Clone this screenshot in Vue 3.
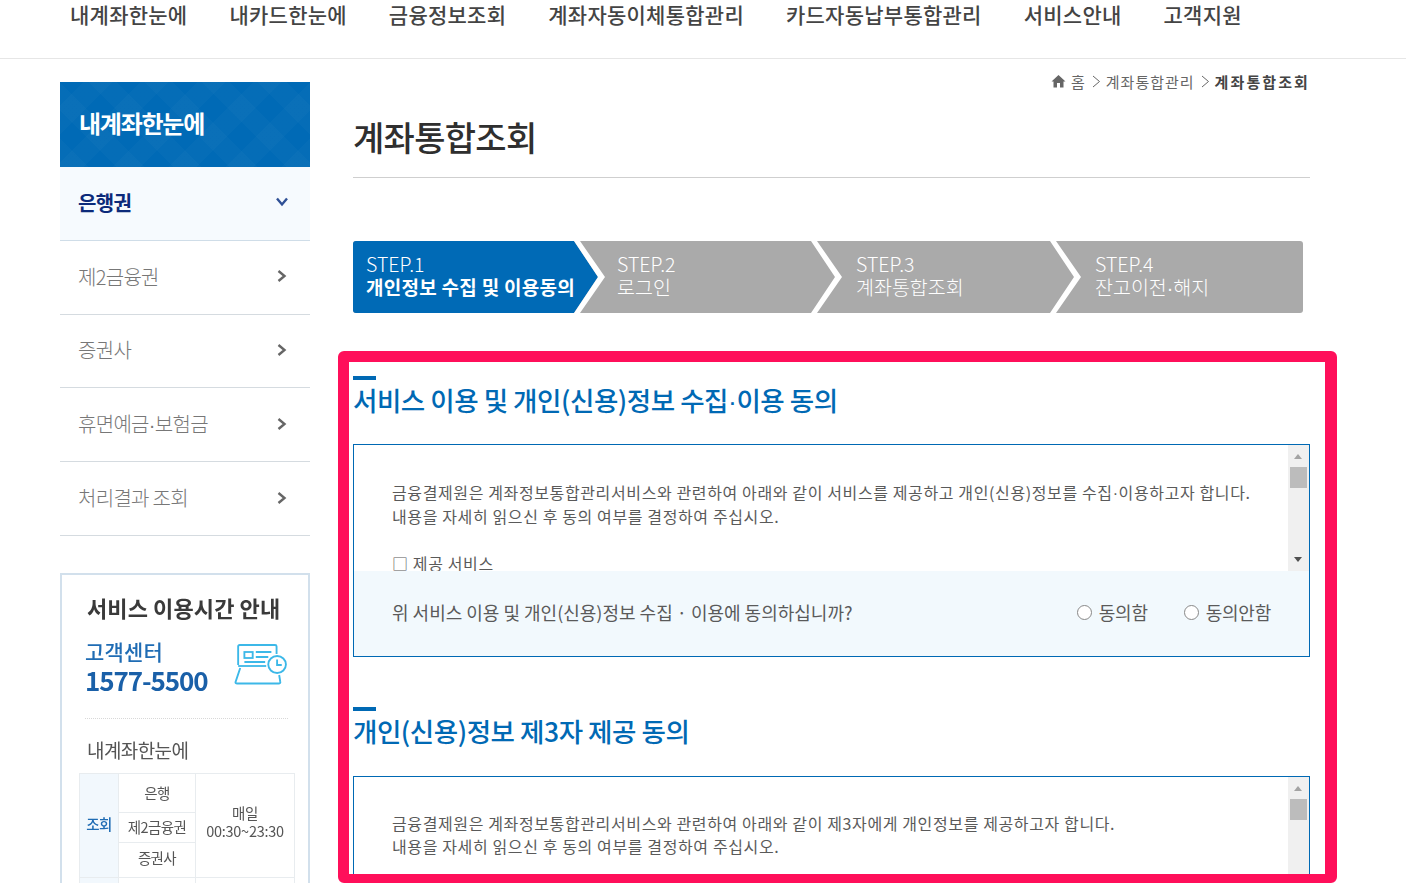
<script setup>
const navItems = ['내계좌한눈에', '내카드한눈에', '금융정보조회', '계좌자동이체통합관리', '카드자동납부통합관리', '서비스안내', '고객지원']
const sideItems = ['제2금융권', '증권사', '휴면예금·보험금', '처리결과 조회']
const steps = [
  { label: 'STEP.1', name: '개인정보 수집 및 이용동의' },
  { label: 'STEP.2', name: '로그인' },
  { label: 'STEP.3', name: '계좌통합조회' },
  { label: 'STEP.4', name: '잔고이전·해지' },
]
</script>

<template>
  <div class="page">
    <header class="topnav">
      <a v-for="item in navItems" :key="item" class="topnav-item">{{ item }}</a>
    </header>

    <div class="layout">
      <aside class="sidebar">
        <div class="side-head">내계좌한눈에</div>
        <div class="side-item active">
          <span>은행권</span>
          <svg class="chev" width="14" height="12" viewBox="0 0 14 12"><path d="M2 2.5 7 8.5 12 2.5" fill="none" stroke="#2f5096" stroke-width="2.4" /></svg>
        </div>
        <div v-for="item in sideItems" :key="item" class="side-item">
          <span><template v-for="(part, i) in item.split('·')" :key="part"><span v-if="i" class="dot">·</span>{{ part }}</template></span>
          <svg class="chev" width="14" height="14" viewBox="0 0 14 14"><path d="M3.5 2 9.5 7 3.5 12" fill="none" stroke="#666" stroke-width="2.4" /></svg>
        </div>

        <div class="hours">
          <h3 class="hours-title">서비스 이용시간 안내</h3>
          <div class="hours-contact">
            <div>
              <div class="hours-label">고객센터</div>
              <div class="hours-phone">1577-5500</div>
            </div>
            <svg class="hours-icon" width="54" height="42" viewBox="0 0 52 42" preserveAspectRatio="none" fill="none" stroke="#3cb8e8" stroke-width="1.8">
              <path d="M4 22V3.5Q4 2 5.5 2H39.5Q41 2 41 3.5V11" />
              <path d="M4 23H31" />
              <rect x="10" y="9" width="8" height="6" />
              <path d="M21 9H36M21 14H33M10 19H30" />
              <circle cx="41.5" cy="21.5" r="8.5" />
              <path d="M41.5 16.5V22H46" />
              <path d="M6 25 1.5 39Q1.2 40.5 3 40.5H43Q45 40.5 44.5 38.5L43.5 32" />
            </svg>
          </div>
          <div class="hours-sub">내계좌한눈에</div>
          <table class="hours-table">
            <colgroup>
              <col class="c1" />
              <col class="c2" />
              <col class="c3" />
            </colgroup>
            <tbody>
              <tr class="r1">
                <th rowspan="3">조회</th>
                <td>은행</td>
                <td rowspan="3" class="daily">매일<br />00:30~23:30</td>
              </tr>
              <tr class="r2"><td>제2금융권</td></tr>
              <tr class="r3"><td class="up">증권사</td></tr>
              <tr class="r4"><th></th><td></td><td></td></tr>
            </tbody>
          </table>
        </div>
      </aside>

      <main class="main">
        <nav class="crumbs">
          <svg width="15" height="14" viewBox="0 0 15 14"><path d="M7.5 1 0.5 7.5H2.5V13.5H6V9H9V13.5H12.5V7.5H14.5Z" fill="#666" /></svg>
          <span class="crumb-home">홈</span>
          <svg class="crumb-sep" width="9" height="13" viewBox="0 0 9 13"><path d="M1 1 7.5 6.5 1 12" fill="none" stroke="#666" /></svg>
          <span>계좌통합관리</span>
          <svg class="crumb-sep" width="9" height="13" viewBox="0 0 9 13"><path d="M1 1 7.5 6.5 1 12" fill="none" stroke="#666" /></svg>
          <strong>계좌통합조회</strong>
        </nav>
        <h1 class="title">계좌통합조회</h1>

        <ol class="steps">
          <li v-for="(step, i) in steps" :key="step.label" class="step" :class="{ current: i === 0 }">
            <span class="step-label">{{ step.label }}</span>
            <span class="step-name"><template v-for="(part, k) in step.name.split('·')" :key="part"><span v-if="k" class="dot">·</span>{{ part }}</template></span>
            <svg v-if="i < 3" class="step-arrow" width="34" height="72" viewBox="0 0 34 72">
              <polygon v-if="i === 0" points="0,0 2,0 26,36 2,72 0,72" fill="#006ab6" />
              <polygon points="2,0 8,0 33,36 8,72 2,72 26,36" fill="#fff" />
            </svg>
          </li>
        </ol>

        <section class="agree first">
          <h2 class="agree-title">서비스 이용 및 개인(신용)정보 수집<span class="dot">·</span>이용 동의</h2>
          <div class="agree-box">
            <div class="agree-text">
              <p>금융결제원은 계좌정보통합관리서비스와 관련하여 아래와 같이 서비스를 제공하고 개인(신용)정보를 수집<span class="dot">·</span>이용하고자 합니다.<br />내용을 자세히 읽으신 후 동의 여부를 결정하여 주십시오.</p>
              <p>□ 제공 서비스</p>
              <div class="scrollbar">
                <i class="arrow-up"></i>
                <i class="thumb"></i>
                <i class="arrow-down"></i>
              </div>
            </div>
            <div class="agree-answer">
              <span class="question">위 서비스 이용 및 개인(신용)정보 수집 · 이용에 동의하십니까?</span>
              <label class="radio"><i></i>동의함</label>
              <label class="radio"><i></i>동의안함</label>
            </div>
          </div>
        </section>

        <section class="agree second">
          <h2 class="agree-title">개인(신용)정보 제3자 제공 동의</h2>
          <div class="agree-box">
            <div class="agree-text">
              <p>금융결제원은 계좌정보통합관리서비스와 관련하여 아래와 같이 제3자에게 개인정보를 제공하고자 합니다.<br />내용을 자세히 읽으신 후 동의 여부를 결정하여 주십시오.</p>
              <div class="scrollbar">
                <i class="arrow-up"></i>
                <i class="thumb"></i>
              </div>
            </div>
          </div>
        </section>
      </main>
    </div>

    <div class="highlight"></div>
  </div>
</template>

<style>
html, body { margin: 0; background: #fff; }
</style>

<style scoped>
.page {
  position: relative;
  width: 1406px;
  height: 883px;
  overflow: hidden;
  background: #fff;
  font-family: "Noto Sans CJK KR", "Noto Sans", sans-serif;
  color: #555;
}
.dot {
  font-family: "Liberation Sans", sans-serif;
}
.topnav {
  display: flex;
  gap: 42px;
  height: 58px;
  padding-left: 70px;
  border-bottom: 1px solid #e6e6e6;
  box-sizing: content-box;
}
.topnav-item {
  font-size: 21px;
  line-height: 28px;
  font-weight: 500;
  letter-spacing: 0.25px;
  color: #444;
  white-space: nowrap;
}
.layout {
  display: flex;
  gap: 43px;
  padding-left: 60px;
}
.sidebar {
  width: 250px;
  flex: none;
  margin-top: 23px;
}
.side-head {
  height: 85px;
  padding: 0 0 4px 19px;
  display: flex;
  align-items: center;
  box-sizing: border-box;
  background-color: #006ab6;
  background-image: repeating-linear-gradient(45deg, rgba(255,255,255,.018) 0 20px, transparent 20px 40px), repeating-linear-gradient(-45deg, rgba(255,255,255,.018) 0 20px, transparent 20px 40px);
  color: #fff;
  font-size: 24px;
  font-weight: 700;
  letter-spacing: -1.25px;
}
.side-item {
  height: 73.8px;
  box-sizing: border-box;
  padding: 0 21px 2px 18px;
  display: flex;
  align-items: center;
  justify-content: space-between;
  border-bottom: 1px solid #d5dbe0;
  font-size: 20px;
  letter-spacing: -0.7px;
  color: #777;
  font-weight: 300;
}
.side-item.active {
  background: #f6fafe;
  color: #0c2a7a;
  font-weight: 700;
  border-bottom-color: #cfdde8;
}
.hours {
  margin-top: 37px;
  height: 320px;
  box-sizing: border-box;
  padding: 17px 13px 0 18px;
  border: 2px solid #d2e0ec;
  filter: blur(0.35px);
}
.hours-title {
  margin: 0 0 0 7px;
  font-size: 22px;
  line-height: 30px;
  font-weight: 700;
  letter-spacing: 0.1px;
  color: #3a3a3a;
  white-space: nowrap;
}
.hours-contact {
  margin: 15px 7px 0 5px;
  padding-bottom: 23px;
  display: flex;
  justify-content: space-between;
  align-items: flex-start;
  border-bottom: 1px dotted #d8d8d8;
}
.hours-label {
  font-size: 21px;
  line-height: 28px;
  letter-spacing: 0.2px;
  color: #1f6cb4;
  font-weight: 500;
}
.hours-phone {
  font-size: 26px;
  line-height: 30px;
  font-weight: 700;
  letter-spacing: -1.1px;
  color: #1a60a8;
}
.hours-icon {
  margin: 6px 0 0 0;
}
.hours-sub {
  margin: 17px 0 9px 7px;
  font-size: 19px;
  line-height: 28px;
  letter-spacing: -0.6px;
  color: #555;
}
.hours-table {
  width: 215px;
  table-layout: fixed;
  border-collapse: collapse;
  font-size: 14.5px;
  letter-spacing: -0.6px;
  color: #555;
  text-align: center;
  margin-left: -1px;
}
.c1 { width: 39px; }
.c2 { width: 77px; }
.c3 { width: 99px; }
.hours-table th,
.hours-table td {
  border: 1px solid #e8ecef;
  padding: 0;
  line-height: 18px;
  font-weight: 400;
}
.hours-table th {
  background: #f2f8fd;
  color: #1f6cb4;
  font-weight: 500;
  padding-bottom: 3px;
}
.hours-table td.daily {
  padding-bottom: 6px;
  letter-spacing: -0.25px;
}
.hours-table td.up {
  padding-bottom: 3px;
}
.r1 { height: 39px; }
.r2 { height: 30px; }
.r3 { height: 35px; }
.r4 { height: 30px; }
.main {
  width: 957px;
  flex: none;
}
.crumbs {
  display: flex;
  justify-content: flex-end;
  align-items: center;
  height: 20px;
  margin-top: 12px;
  font-size: 15px;
  color: #666;
  letter-spacing: 1px;
  white-space: nowrap;
}
.crumb-home { margin-left: 5px; }
.crumb-sep { margin: 0 5px 0 6px; }
.crumbs strong {
  color: #444;
  font-weight: 700;
  letter-spacing: 2.1px;
}
.title {
  margin: 21px 0 0;
  height: 65px;
  box-sizing: content-box;
  border-bottom: 1px solid #cfcfcf;
  font-size: 34px;
  line-height: 50px;
  font-weight: 500;
  letter-spacing: -0.7px;
  color: #2f2f2f;
}
.steps {
  list-style: none;
  margin: 63px 0 0;
  padding: 0;
  width: 950px;
  height: 72px;
  display: flex;
  background: #aaa;
  border-radius: 3px;
}
.step {
  position: relative;
  width: 239px;
  box-sizing: border-box;
  padding: 12px 0 0 45px;
  color: #fff;
  font-size: 19.5px;
  line-height: 22px;
  font-weight: 300;
  letter-spacing: 0;
  white-space: nowrap;
}
.step:last-child { width: 253px; }
.step.current {
  width: 219px;
  padding-left: 13px;
  background: #006ab6;
  border-radius: 3px 0 0 3px;
}
.step-label, .step-name { display: block; }
.step-name { margin-top: 1px; }
.current .step-name {
  font-weight: 700;
  font-size: 19px;
  letter-spacing: 0.27px;
}
.step-arrow {
  position: absolute;
  left: calc(100% - 2px);
  top: 0;
  z-index: 1;
}
.current .step-arrow {
  left: 100%;
}
.current .step-label,
.current .step-name {
  position: relative;
  z-index: 2;
}
.agree {
  margin-top: 50px;
}
.agree.first {
  margin-top: 63px;
}
.agree-title {
  margin: 0;
  height: 68px;
  box-sizing: border-box;
  padding-top: 6px;
  font-size: 26.5px;
  line-height: 36px;
  font-weight: 500;
  letter-spacing: -0.45px;
  color: #0069b4;
  white-space: nowrap;
  background: linear-gradient(#0069b4, #0069b4) no-repeat 0 0 / 23px 4px;
}
.second .agree-title {
  height: 69px;
}
.agree-box {
  border: 1px solid #0069b4;
  background: #fff;
}
.agree-text {
  position: relative;
  height: 126px;
  overflow: hidden;
  box-sizing: border-box;
  padding: 36px 40px 0 38px;
  font-size: 16px;
  line-height: 23px;
  letter-spacing: 0.62px;
  color: #5a5a5a;
}
.second .agree-text {
  padding-top: 35px;
}
.agree-text p {
  margin: 0 0 24px;
  white-space: nowrap;
}
.scrollbar {
  position: absolute;
  top: 0;
  right: 0;
  bottom: 0;
  width: 21px;
  background: #f0f0f0;
}
.scrollbar i {
  position: absolute;
  display: block;
}
.thumb {
  left: 2px;
  top: 22px;
  width: 17px;
  height: 21px;
  background: #bcbcbc;
}
.arrow-up {
  left: 6px;
  top: 9px;
  border: 4.5px solid transparent;
  border-top: 0;
  border-bottom: 5px solid #a3a3a3;
}
.arrow-down {
  left: 6px;
  bottom: 9px;
  border: 4.5px solid transparent;
  border-bottom: 0;
  border-top: 5px solid #505050;
}
.agree-answer {
  height: 85px;
  box-sizing: border-box;
  padding: 0 38px 3px;
  display: flex;
  align-items: center;
  gap: 36px;
  background: #f2f9fd;
  font-size: 18px;
  letter-spacing: -0.25px;
  color: #5a5a5a;
  white-space: nowrap;
}
.question {
  margin-right: auto;
  letter-spacing: 0;
}
.radio {
  display: flex;
  align-items: center;
  gap: 7px;
}
.radio i {
  width: 15px;
  height: 15px;
  box-sizing: border-box;
  border: 1.5px solid #888;
  border-radius: 50%;
  background: #fff;
}
.highlight {
  position: absolute;
  left: 338px;
  top: 351px;
  width: 999px;
  height: 532px;
  box-sizing: border-box;
  border: solid #ff0f5a;
  border-width: 11px 12px 9px 11px;
  border-radius: 6px;
  pointer-events: none;
  z-index: 2;
}
</style>
